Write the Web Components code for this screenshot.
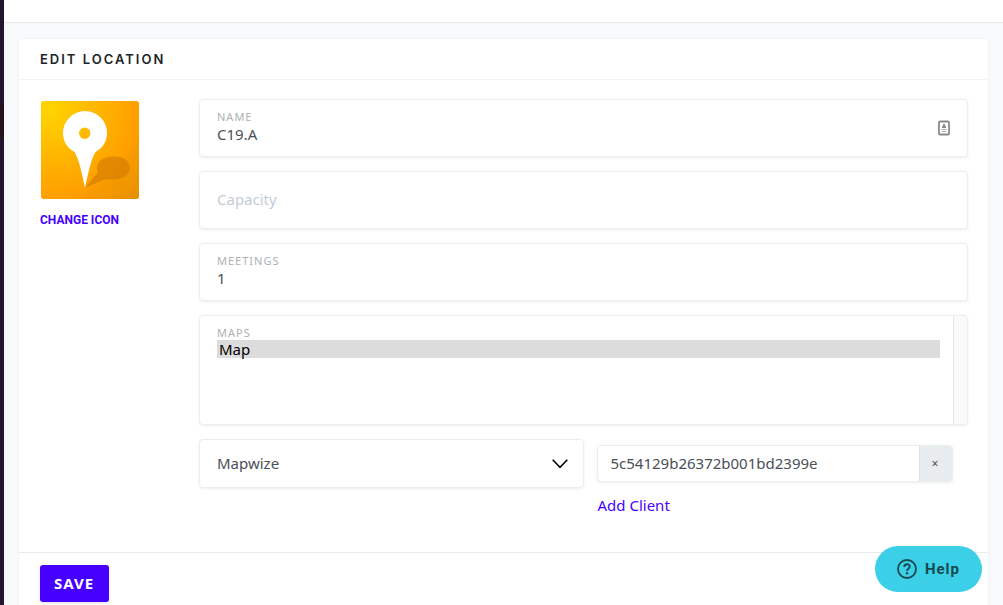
<!DOCTYPE html>
<html lang="en">
<head>
<meta charset="utf-8">
<meta name="viewport" content="width=device-width, initial-scale=1">
<title>Edit location</title>
<style>
  body { margin: 0; background: #f8f9fb; color: #495057; font: 15px/18px "Noto Sans", sans-serif; }
</style>
</head>
<body>
<app-shell>
  <edit-card heading="Edit location">
    <location-icon slot="aside"></location-icon>
    <text-field label="Name" value="C19.A" autofill></text-field>
    <text-field label="Capacity"></text-field>
    <text-field label="Meetings" value="1"></text-field>
    <list-field label="Maps" option="Map"></list-field>
    <client-row></client-row>
    <save-button slot="footer">SAVE</save-button>
  </edit-card>
</app-shell>
<help-launcher>Help</help-launcher>

<script>
const FIELD_BOX = `
  .box { box-sizing: border-box; background: #fff; border: 1px solid #ebeeef; border-radius: 4px;
         box-shadow: 0 1px 3px rgba(20, 60, 60, .08); }
  label { display: block; font-size: 11px; line-height: 14px; letter-spacing: 1px; color: #aeb0b2; text-transform: uppercase; }
  input, select, button { font: inherit; color: inherit; outline: none; }
`;

function define(name, render) {
  customElements.define(name, class extends HTMLElement {
    connectedCallback() {
      if (this.shadowRoot) return;
      this.attachShadow({ mode: "open" }).innerHTML = render(this);
    }
  });
}

define("app-shell", () => `
  <style>
    :host { display: grid; grid-template-columns: 4px 1fr; min-height: 100vh; }
    nav { background: linear-gradient(#22152f 102px, #27121f 102px, #27121f 139px, #22152f 139px); }
    .bar { height: 22px; background: #fff; border-bottom: 1px solid #e8eaec; }
    main { padding: 16px 15px 0; }
  </style>
  <nav aria-label="Main"></nav>
  <div><header class="bar"></header><main><slot></slot></main></div>
`);

define("edit-card", el => `
  <style>
    :host { display: block; background: #fff; border-radius: 4px; box-shadow: 0 0 2px rgba(20, 60, 60, .08); }
    h1 { margin: 0; padding: 11px 21px; font: 600 13px/18px Inter, sans-serif; letter-spacing: 2px;
         color: #212529; text-transform: uppercase; border-bottom: 1px solid #f1f4fb; }
    .body { display: grid; grid-template-columns: 139px minmax(0, 1fr); gap: 20px; padding: 19px 20px 37px 21px; }
    .fields { display: flex; flex-direction: column; gap: 14px; }
    footer { padding: 12px 21px; border-top: 1px solid #e8ebee; }
  </style>
  <h1>${el.getAttribute("heading")}</h1>
  <div class="body">
    <slot name="aside"></slot>
    <div class="fields"><slot></slot></div>
  </div>
  <footer><slot name="footer"></slot></footer>
`);

define("location-icon", () => `
  <style>
    :host { display: flex; flex-direction: column; align-items: flex-start; gap: 12px; padding-top: 2px; }
    svg { display: block; margin-left: 1px; }
    a { font: 700 12px/18px Roboto, sans-serif; color: #4600ff; text-decoration: none; }
  </style>
  <svg width="98" height="98" viewBox="0 0 98 98" role="img" aria-label="Location icon">
    <defs>
      <radialGradient id="sun" cx="0.08" cy="0.08" r="1">
        <stop offset="0" stop-color="#ffd500"/><stop offset=".45" stop-color="#ffb900"/>
        <stop offset=".88" stop-color="#ffa000"/><stop offset="1" stop-color="#fc9b00"/>
      </radialGradient>
      <linearGradient id="shade" x1="0" y1="0" x2="1" y2="1">
        <stop offset=".45" stop-color="#ef9a00" stop-opacity="0"/><stop offset="1" stop-color="#e68e00"/>
      </linearGradient>
    </defs>
    <rect width="98" height="98" rx="3" fill="url(#sun)"/>
    <path d="M98 32C86 61 63 85 28 98h67q3 0 3-3z" fill="url(#shade)"/>
    <path d="M44 87 57 71C54 65 57 56 73 55.500C84 55.500 89 61 89 67C89 74 81 79 70 78.500Q66 78 62 79Z" fill="#d98200" fill-opacity=".8"/>
    <path fill="#fff" fill-rule="evenodd" d="M44 87C41 73 38 58 33.500 51C26 47 22 40 22 32a22 22 0 0 1 44 0C66 40 62 47 54.500 51C50 58 47 73 44 87ZM43.700 26.500a5.700 5.700 0 1 0 0 11.400a5.700 5.700 0 1 0 0-11.400Z"/>
  </svg>
  <a href="#icon">CHANGE ICON</a>
`);

define("text-field", el => {
  const label = el.getAttribute("label");
  const value = el.getAttribute("value");
  return `
  <style>
    ${FIELD_BOX}
    :host { display: block; }
    .box { display: flex; align-items: center; height: 58px; padding: 0 17px; }
    .text { flex: 1; padding-bottom: 2px; }
    input { display: block; box-sizing: border-box; width: 100%; height: 20px; padding: 0; border: 0; background: none; }
    input::placeholder { color: #c3ccd6; opacity: 1; }
  </style>
  <div class="box">
    <div class="text">
      ${value ? `<label for="f">${label}</label>` : ""}
      <input id="f" ${value ? `value="${value}"` : `placeholder="${label}" aria-label="${label}"`}>
    </div>
    ${el.hasAttribute("autofill") ? `
    <svg width="12" height="16" viewBox="0 0 12 16" aria-hidden="true">
      <rect x="1" y="1.500" width="10" height="13" rx="1" fill="#fff" stroke="#8b8b8b" stroke-width="1.800"/>
      <path d="M5 4h2v2h1v2H4V6h1z" fill="#8b8b8b"/>
      <path d="M3.500 9.500h5M3.500 11.500h5" stroke="#b2b2b2"/>
    </svg>` : ""}
  </div>`;
});

define("list-field", el => `
  <style>
    ${FIELD_BOX}
    :host { display: block; }
    .box { display: flex; height: 110px; overflow: hidden; }
    .list { flex: 1; min-width: 0; padding: 10px 13px 0 17px; }
    .track { width: 13px; background: #fafafa; border-left: 1px solid #e4e4e4; }
    select { display: block; width: 100%; height: 72px; padding: 0; border: 0; border-radius: 0; background: none; overflow: hidden; }
    option { box-sizing: border-box; height: 18px; min-height: 0; line-height: 18px; padding: 0 2px; display: flex; align-items: center; }
    option:checked { background: #dcdcdc linear-gradient(#dcdcdc, #dcdcdc); color: #000; }
  </style>
  <div class="box">
    <div class="list">
      <label for="l">${el.getAttribute("label")}</label>
      <select id="l" multiple size="4"><option selected>${el.getAttribute("option")}</option></select>
    </div>
    <div class="track"></div>
  </div>
`);

define("client-row", () => `
  <style>
    ${FIELD_BOX}
    :host { display: grid; grid-template-columns: 1fr 1fr; align-items: start; }
    .pick { display: grid; align-items: center; }
    .pick > * { grid-area: 1 / 1; }
    select { appearance: none; width: 100%; height: 49px; padding: 0 17px 2px; }
    .pick svg { justify-self: end; margin-right: 16px; pointer-events: none; }
    .client { padding: 6px 15px 0 13px; }
    .group { display: flex; height: 37px; overflow: hidden; }
    input { flex: 1; min-width: 0; border: 0; padding: 0 12px 2px 13px; background: none; }
    button { width: 33px; padding: 0 2px 0 0; border: 0; border-left: 1px solid #dee1e4; background: #e9ecef; font-size: 12px; }
    a { display: inline-block; margin: 13px 0 0 1px; line-height: 20px; color: #4600ff; text-decoration: none; }
  </style>
  <div class="pick">
    <select class="box" aria-label="Map provider"><option>Mapwize</option></select>
    <svg width="16" height="10" viewBox="0 0 16 10" fill="none" stroke="#000" stroke-width="1.600" aria-hidden="true"><path d="M.7.8 8 8.300 15.300.8"/></svg>
  </div>
  <div class="client">
    <div class="box group">
      <input aria-label="Client identifier" value="5c54129b26372b001bd2399e">
      <button type="button" aria-label="Remove client">×</button>
    </div>
    <a href="#client">Add Client</a>
  </div>
`);

define("save-button", () => `
  <style>
    :host { display: block; }
    button { display: block; height: 37px; padding: 0 15px 2px 14px; border: 0; border-radius: 3px; background: #4600ff; color: #fff;
             font: 700 15px/18px "Noto Sans", sans-serif; letter-spacing: 1px; box-shadow: 0 1px 3px rgba(20, 60, 60, .15); }
  </style>
  <button type="submit"><slot></slot></button>
`);

define("help-launcher", () => `
  <style>
    :host { position: fixed; right: 21px; bottom: 13px; }
    button { display: flex; align-items: center; gap: 8px; height: 46px; padding: 0 22px; border: 0; border-radius: 23px;
             background: #3bd0e8; color: #17494f; font: 700 15px/20px Roboto, sans-serif; letter-spacing: 1px; }
  </style>
  <button type="button">
    <svg width="20" height="20" viewBox="0 0 20 20" fill="none" stroke="currentColor" aria-hidden="true">
      <circle cx="10" cy="10" r="9" stroke-width="1.800"/>
      <path d="M7.300 8C7.300 4.300 12.700 4.500 12.700 7.600C12.700 9.700 10 9.600 10 12" stroke-width="1.900"/>
      <circle cx="10" cy="14.300" r="1.200" fill="currentColor" stroke="none"/>
    </svg>
    <slot></slot>
  </button>
`);
</script>
</body>
</html>
